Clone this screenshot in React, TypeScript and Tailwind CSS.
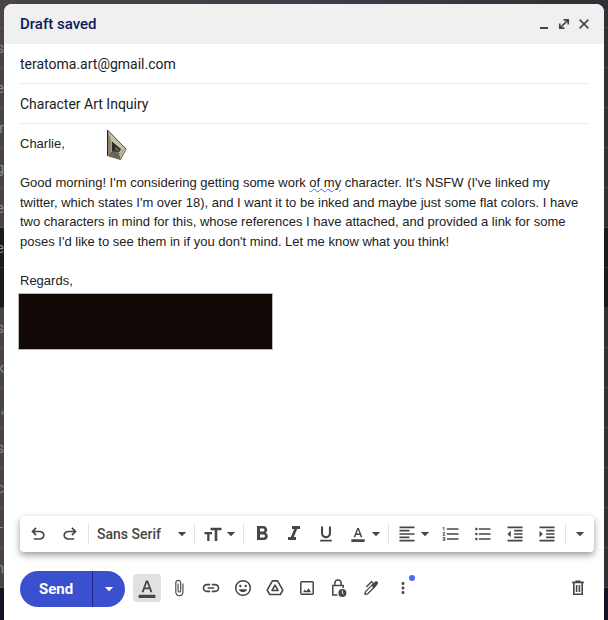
import type { ReactNode } from "react";
import {
  MdAttachFile,
  MdFormatAlignLeft,
  MdFormatBold,
  MdFormatColorText,
  MdFormatIndentDecrease,
  MdFormatIndentIncrease,
  MdFormatItalic,
  MdFormatListBulleted,
  MdFormatListNumbered,
  MdFormatUnderlined,
  MdLink,
  MdMoreVert,
} from "react-icons/md";

// inbox rows that peek out on both sides of the compose window
const inboxRows = [
  { text: "", unread: false },
  { text: "s", unread: false },
  { text: "e", unread: false },
  { text: "tr", unread: false },
  { text: "g", unread: false },
  { text: "ve", unread: false },
  { text: "e", unread: true },
  { text: "", unread: true },
  { text: "s", unread: false },
  { text: "k", unread: false },
  { text: ",", unread: false },
  { text: "s", unread: false },
  { text: "nc", unread: false },
  { text: "–", unread: false },
  { text: "m", unread: false },
];

const Caret = () => (
  <svg viewBox="0 0 16 16" className="size-4 shrink-0" fill="currentColor">
    <path d="M3.8 6h8.4L8 10.3z" />
  </svg>
);

const Divider = () => <span className="mx-0.5 h-5 w-px shrink-0 bg-[#e3e3e3]" />;

const UndoIcon = () => (
  <svg viewBox="0 -960 960 960" className="size-5" fill="currentColor">
    <path d="M280-200v-80h284q63 0 109.5-40T720-420q0-60-46.5-100T564-560H312l104 104-56 56-200-200 200-200 56 56-104 104h252q97 0 166.5 63T800-420q0 94-69.5 157T564-200H280Z" />
  </svg>
);

const RedoIcon = () => (
  <svg viewBox="0 -960 960 960" className="size-5" fill="currentColor">
    <path d="M396-200q-97 0-166.5-63T160-420q0-94 69.5-157T396-640h252L544-744l56-56 200 200-200 200-56-56 104-104H396q-63 0-109.5 40T240-420q0 60 46.5 100T396-280h284v80H396Z" />
  </svg>
);

const SizeIcon = () => (
  <svg viewBox="0 0 20 20" className="size-5" fill="currentColor">
    <path d="M7.5 3.8h11v2.5h-4.2V17h-2.6V6.3H7.5zM1.5 8H9v2.3H6.5V17H4.2v-6.7H1.500z" />
  </svg>
);

const EmojiIcon = () => (
  <svg viewBox="0 0 20 20" className="size-5" fill="currentColor">
    <circle cx="10" cy="10" r="7.3" fill="none" stroke="currentColor" strokeWidth="1.5" />
    <circle cx="7.3" cy="8" r="1.200" />
    <circle cx="12.700" cy="8" r="1.200" />
    <path d="M5.900 11.300h8.200a4.200 3.600 0 0 1-8.200 0z" />
  </svg>
);

const DriveIcon = () => (
  <svg viewBox="0 0 20 20" className="size-5" fill="none" stroke="currentColor" strokeWidth="1.6" strokeLinejoin="round">
    <path d="M7.4 2.900h5.200l5.200 9.200-2.500 4.400H4.700l-2.500-4.400z" />
    <path d="M10 7.200l3 5.300H7z" />
  </svg>
);

const ImageIcon = () => (
  <svg viewBox="0 0 20 20" className="size-5">
    <rect x="3.8" y="3.8" width="12.4" height="12.4" rx="1" fill="none" stroke="currentColor" strokeWidth="1.5" />
    <path d="M6 14.200l1.800-2.800 1.500 1.800 2.200-3 2.700 4z" fill="currentColor" />
  </svg>
);

const LockClockIcon = () => (
  <svg viewBox="0 0 20 20" className="size-5" fill="none" stroke="currentColor" strokeWidth="1.5">
    <path d="M8.500 17H3.800V7.600h10.400v2.400M5.900 7.600V5a3.100 3.100 0 0 1 6.200 0v2.600" />
    <circle cx="13.400" cy="14.900" r="4" fill="currentColor" stroke="none" />
    <path d="M13.300 12.600v2.500l1.300 1.300" stroke="#fff" strokeWidth="1" />
  </svg>
);

const PenIcon = () => (
  <svg viewBox="0 0 20 20" className="size-5">
    <path d="M3.900 16.400l.6-2.800 8-8 2.200 2.200-8 8z" fill="none" stroke="currentColor" strokeWidth="1.300" strokeLinejoin="round" />
    <path d="M10.700 7l3.400-3.400a1.500 1.500 0 0 1 2.100 0l.5.5a1.500 1.500 0 0 1 0 2.100l-4.500 4.500z" fill="currentColor" />
    <path d="M5.300 9l5.200-5.200 1.500 1.300" fill="none" stroke="currentColor" strokeWidth="1.400" />
  </svg>
);

const TrashIcon = () => (
  <svg viewBox="0 0 20 20" className="size-5" fill="none" stroke="currentColor" strokeWidth="1.6">
    <path d="M4.200 4.400h11.600M7.500 3.400h5M5.800 4.400v11.800h8.400V4.400M8.600 7v7M11.400 7v7" />
  </svg>
);

const Cursor = () => (
  <svg viewBox="0 0 20 32" className="pointer-events-none absolute left-[103px] top-[125px] h-8 w-5">
    <path d="M.5 1v25.500L13.500 30.500 19 20z" fill="#c9c2a6" stroke="#4a463c" />
    <path d="M1 2v24.200l3.500-3.700V13z" fill="#8f876d" />
    <path d="M1 26.200l3.500-3.700 7.500 1 1.500 6.500z" fill="#6b6453" />
    <path d="M13.500 30l-1.500-6.500 2-3.500 4.700.2z" fill="#b8b199" />
    <path d="M5 12.500v10l7 .8 2-3.300z" fill="#2c2b29" />
    <path d="M8 17.500v4.500l3.500.5 1-2z" fill="#5b5850" />
    <path d="M.5 1v25.500" stroke="#222" />
  </svg>
);

function ToolButton({ label, children }: { label: string; children: ReactNode }) {
  return (
    <button type="button" aria-label={label} className="flex h-7 w-8 shrink-0 items-center justify-center">
      {children}
    </button>
  );
}

function MenuButton({ label, children }: { label: string; children: ReactNode }) {
  return (
    <button type="button" aria-label={label} className="flex h-7 w-11 shrink-0 items-center pl-1.5 pr-0.5">
      <span className="flex w-5 justify-center">{children}</span>
      <Caret />
    </button>
  );
}

function ActionButton({ label, children }: { label: string; children: ReactNode }) {
  return (
    <button type="button" aria-label={label} className="relative flex size-7 shrink-0 items-center justify-center rounded">
      {children}
    </button>
  );
}

function InboxBackdrop() {
  return (
    <div aria-hidden="true" className="absolute inset-0 overflow-hidden bg-linear-to-r from-[#4b4345] via-[#3c3e48] to-[#303136]">
      <div className="-mt-3 flex flex-col">
        {inboxRows.map((row, i) => (
          <div
            key={i}
            className={`flex h-10 items-center border-b border-white/10 ${row.unread ? "bg-[#1b191b]" : ""}`}
          >
            <span className="flex w-1 justify-end text-sm text-[#8f898c]">{row.text}</span>
          </div>
        ))}
      </div>
      <div className="h-10 bg-[#151222]" />
    </div>
  );
}

export default function App() {
  return (
    <div className="relative flex min-h-screen flex-col overflow-hidden font-['Roboto','Liberation_Sans',sans-serif] text-[#444746]">
      <InboxBackdrop />

      <main className="relative mx-1 mt-1 flex flex-1 flex-col rounded-t-lg bg-white">
        <header className="flex h-10 items-center justify-between rounded-t-lg bg-[#f0f0f0] pl-4 pr-2.5">
          <h1 className="text-[15px] font-medium text-[#0b1a5c]">Draft saved</h1>
          <div className="flex">
            <button type="button" aria-label="Minimize" className="flex size-5 items-center justify-center">
              <svg viewBox="0 0 12 12" className="size-3" fill="currentColor">
                <path d="M2 9h8v2H2z" />
              </svg>
            </button>
            <button type="button" aria-label="Full screen" className="flex size-5 items-center justify-center">
              <svg viewBox="0 0 12 12" className="size-3" fill="none" stroke="currentColor" strokeWidth="1.7">
                <path d="M5.5 1.800h4.700v4.700M1.800 5.500v4.700h4.700M10 2L2 10" />
              </svg>
            </button>
            <button type="button" aria-label="Save and close" className="flex size-5 items-center justify-center">
              <svg viewBox="0 0 12 12" className="size-3" fill="none" stroke="currentColor" strokeWidth="1.6">
                <path d="M1.600 1.600l8.800 8.800M10.400 1.600l-8.800 8.800" />
              </svg>
            </button>
          </div>
        </header>

        <div className="mx-4 flex flex-col text-[#202124]">
          <input
            type="email"
            aria-label="To"
            defaultValue="teratoma.art@gmail.com"
            className="h-10 border-b border-[#ebebeb] text-sm outline-none"
          />
          <input
            type="text"
            aria-label="Subject"
            defaultValue="Character Art Inquiry"
            className="h-10 border-b border-[#ebebeb] text-sm outline-none"
          />
        </div>

        <div
          role="textbox"
          aria-label="Message body"
          aria-multiline="true"
          contentEditable
          suppressContentEditableWarning
          spellCheck={false}
          className="flex-1 px-4 pt-2.5 font-['Liberation_Sans',Arial,sans-serif] text-[13px] leading-normal text-[#222222] outline-none"
        >
          <p>Charlie,</p>
          <br />
          <p>
            Good morning! I'm considering getting some work{" "}
            <span className="underline decoration-[#4a6cf0] decoration-wavy decoration-1">of my</span> character. It's NSFW (I've
            linked my twitter, which states I'm over 18), and I want it to be inked and maybe just some flat colors. I have two
            characters in mind for this, whose references I have attached, and provided a link for some poses I'd like to see
            them in if you don't mind. Let me know what you think!
          </p>
          <br />
          <p>Regards,</p>
          <div className="-ml-0.5 mt-[3px] h-[57px] w-[255px] border border-[#b9bab4] bg-[#120805]" />
        </div>

        <div
          role="toolbar"
          aria-label="Formatting options"
          className="ml-4 mr-2.5 flex h-9 items-center rounded-sm bg-white px-0.5 shadow-[0_3px_7px_0_rgba(0,0,0,0.4)]"
        >
          <ToolButton label="Undo"><UndoIcon /></ToolButton>
          <ToolButton label="Redo"><RedoIcon /></ToolButton>
          <Divider />
          <div className="relative flex min-w-0 flex-1 items-center">
            <select aria-label="Font" className="h-7 w-full appearance-none pl-1.5 text-sm font-medium outline-none">
              <option>Sans Serif</option>
              <option>Serif</option>
              <option>Fixed Width</option>
            </select>
            <span className="pointer-events-none absolute right-0.5"><Caret /></span>
          </div>
          <Divider />
          <MenuButton label="Size"><SizeIcon /></MenuButton>
          <Divider />
          <ToolButton label="Bold"><MdFormatBold className="size-6" /></ToolButton>
          <ToolButton label="Italic"><MdFormatItalic className="size-6" /></ToolButton>
          <ToolButton label="Underline"><MdFormatUnderlined className="size-5" /></ToolButton>
          <MenuButton label="Text color"><MdFormatColorText className="size-4" /></MenuButton>
          <Divider />
          <MenuButton label="Align"><MdFormatAlignLeft className="size-5" /></MenuButton>
          <ToolButton label="Numbered list"><MdFormatListNumbered className="size-5" /></ToolButton>
          <ToolButton label="Bulleted list"><MdFormatListBulleted className="size-5" /></ToolButton>
          <ToolButton label="Indent less"><MdFormatIndentDecrease className="size-5" /></ToolButton>
          <ToolButton label="Indent more"><MdFormatIndentIncrease className="size-5" /></ToolButton>
          <Divider />
          <button type="button" aria-label="More formatting options" className="flex h-7 w-6 shrink-0 items-center justify-center">
            <Caret />
          </button>
        </div>

        <footer className="flex items-start pb-[13px] pl-4 pr-3 pt-[19px]">
          <div className="flex h-9 overflow-hidden rounded-full bg-[#3b50ce] text-white">
            <button type="button" className="w-18 text-[15px] font-bold">Send</button>
            <button type="button" aria-label="More send options" className="flex w-[33px] items-center justify-center border-l border-[#1f2c80]">
              <Caret />
            </button>
          </div>
          <div className="ml-2 flex flex-1 gap-1 pt-[3px]">
            <button type="button" aria-label="Formatting options" className="flex size-7 items-center justify-center rounded bg-[#e1e1e1]">
              <MdFormatColorText className="size-5" />
            </button>
            <ActionButton label="Attach files"><MdAttachFile className="size-[18px]" /></ActionButton>
            <ActionButton label="Insert link"><MdLink className="size-5" /></ActionButton>
            <ActionButton label="Insert emoji"><EmojiIcon /></ActionButton>
            <ActionButton label="Insert files using Drive"><DriveIcon /></ActionButton>
            <ActionButton label="Insert photo"><ImageIcon /></ActionButton>
            <ActionButton label="Confidential mode"><LockClockIcon /></ActionButton>
            <ActionButton label="Insert signature"><PenIcon /></ActionButton>
            <ActionButton label="More options">
              <MdMoreVert className="size-[18px]" />
              <span className="absolute right-0.5 top-px size-1.5 rounded-full bg-[#4a6cf0]" />
            </ActionButton>
          </div>
          <div className="pt-[3px]">
            <ActionButton label="Discard draft"><TrashIcon /></ActionButton>
          </div>
        </footer>

        <Cursor />
      </main>
    </div>
  );
}
